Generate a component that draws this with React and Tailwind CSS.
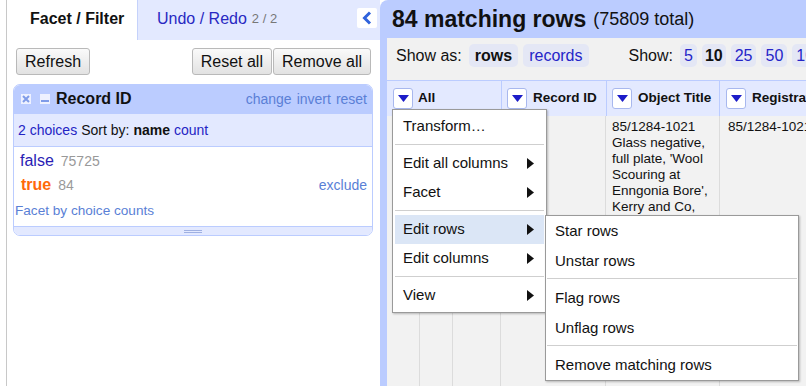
import React from 'react';

function DropBtn() {
    return (
        <div className="w-[20px] h-[21px] bg-white border border-[#a8b8ee] rounded-[3px] flex items-center justify-center shrink-0">
            <svg width="11" height="7" viewBox="0 0 11 7">
                <polygon points="0,0 11,0 5.5,7" fill="#1c1cc8" />
            </svg>
        </div>
    );
}

function Arrow() {
    return (
        <svg width="7" height="11" viewBox="0 0 7 11" className="ml-auto">
            <polygon points="0,0 7,5.5 0,11" fill="#111" />
        </svg>
    );
}

function MenuItem({ label, arrow, active, h = 'h-[29px]' }) {
    return (
        <div className={`${h} flex items-center pl-[8px] pr-[10px] ${active ? 'bg-[#dbe6f6]' : ''}`}>
            <span>{label}</span>
            {arrow && <Arrow />}
        </div>
    );
}

function Sep({ cls = 'mt-[3px] mb-[4px]' }) {
    return <div className={`h-px bg-[#cfcfcf] ${cls}`} />;
}

function Pill({ children, active, cls = 'px-[6px]' }) {
    return (
        <span className={`h-[23px] flex items-center rounded-[5px] bg-[#e4e7f5] ${cls} ${active ? 'font-bold text-[#111]' : 'text-[#2525c8]'}`}>
            {children}
        </span>
    );
}

export default function App() {
    return (
        <div className="relative w-[806px] h-[386px] flex overflow-hidden bg-white text-[#111] font-['Liberation_Sans',Arial,sans-serif]">
            {/* Left panel */}
            <div className="w-[6px] shrink-0" />
            <div className="w-[374px] shrink-0 border-l border-[#c8c8c8] flex flex-col">
                <div className="h-[40px] bg-[#e3e9ff] flex items-stretch">
                    <div className="w-[131px] bg-white border-r border-[#c5d2fb] flex items-center pl-[23px] pb-[3px] text-[16px] font-bold">
                        Facet / Filter
                    </div>
                    <div className="flex items-center pl-[19px] pb-[3px] text-[16px] text-[#2828c2]">
                        Undo / Redo
                        <span className="ml-[5px] text-[13px] text-[#777]">2 / 2</span>
                    </div>
                    <div className="ml-auto mr-[3px] mt-[8px] w-[20px] h-[20px] bg-white rounded-[2px] flex items-center justify-center">
                        <svg width="10" height="14" viewBox="0 0 10 14">
                            <polyline points="8,1.5 2.5,7 8,12.5" fill="none" stroke="#2f62dc" strokeWidth="3" />
                        </svg>
                    </div>
                </div>

                <div className="flex items-center pl-[9px] pr-[9px] mt-[8px] text-[16px]">
                    <button className="h-[27px] px-[8px] border border-[#b9b9b9] rounded-[3px] bg-gradient-to-b from-[#fafafa] to-[#e2e2e2]">Refresh</button>
                    <button className="ml-auto h-[27px] px-[8px] border border-[#b9b9b9] rounded-[3px] bg-gradient-to-b from-[#fafafa] to-[#e2e2e2]">Reset all</button>
                    <button className="ml-[1px] h-[27px] px-[8px] border border-[#b9b9b9] rounded-[3px] bg-gradient-to-b from-[#fafafa] to-[#e2e2e2]">Remove all</button>
                </div>

                {/* Facet */}
                <div className="ml-[6px] mt-[9px] w-[360px] rounded-[7px] border border-[#bbccff] overflow-hidden">
                    <div className="h-[28px] bg-[#bbccff] flex items-center pl-[7px] pr-[5px]">
                        <span className="w-[10px] h-[10px] bg-[#eef1ff] flex items-center justify-center">
                            <svg width="8" height="8" viewBox="0 0 8 8">
                                <path d="M1 1L7 7M7 1L1 7" stroke="#7f9be8" strokeWidth="2" />
                            </svg>
                        </span>
                        <span className="ml-[9px] w-[10px] h-[10px] bg-[#eef1ff] flex items-end justify-center pb-[2px]">
                            <span className="w-[8px] h-[2px] bg-[#7f9be8]" />
                        </span>
                        <span className="ml-[6px] text-[16px] font-bold">Record ID</span>
                        <span className="ml-auto flex gap-[5px] text-[14px] text-[#5a7fd6]">
                            <span>change</span><span>invert</span><span>reset</span>
                        </span>
                    </div>
                    <div className="h-[34px] bg-[#e3e9ff] border-t border-b border-[#bbccff] flex items-center pl-[4px] pt-[1px] text-[14px] gap-[4px]">
                        <span className="text-[#2424c4]">2 choices</span>
                        <span>Sort by:</span>
                        <span className="font-bold">name</span>
                        <span className="text-[#2424c4]">count</span>
                    </div>
                    <div className="bg-white h-[79px] flex flex-col pt-[2px]">
                        <div className="h-[24px] flex items-center pl-[6px]">
                            <span className="text-[16px] text-[#2a1db4]">false</span>
                            <span className="ml-[7px] text-[14px] text-[#999]">75725</span>
                        </div>
                        <div className="h-[24px] flex items-center pl-[7px] pr-[5px]">
                            <span className="text-[16px] font-bold text-[#ff6a0a]">true</span>
                            <span className="ml-[7px] text-[14px] text-[#999]">84</span>
                            <span className="ml-auto text-[14px] text-[#5a7fd6]">exclude</span>
                        </div>
                        <div className="h-[22px] mt-[3px] flex items-center pl-[1px] text-[13.6px] text-[#5a7fd6]">Facet by choice counts</div>
                    </div>
                    <div className="h-[9px] bg-[#e3e9ff] border-t border-[#bbccff] flex flex-col items-center justify-center gap-[1px]">
                        <span className="w-[18px] h-px bg-[#9fb0e2]" />
                        <span className="w-[18px] h-px bg-[#9fb0e2]" />
                    </div>
                </div>
            </div>

            {/* Right panel */}
            <div className="flex-1 flex flex-col">
                <div className="h-[38px] bg-[#bbccff] rounded-tl-[8px] flex items-center pl-[12px] pt-[1px]">
                    <span className="text-[23px] font-bold">84 matching rows</span>
                    <span className="ml-[7px] text-[18px]">(75809 total)</span>
                </div>
                <div className="flex-1 flex">
                    <div className="w-[7px] bg-[#bbccff]" />
                    <div className="flex-1 flex flex-col bg-[#f1f1f1]">
                        <div className="h-[42px] flex items-start pt-[6px] pl-[9px] text-[16px] whitespace-nowrap">
                            <span className="h-[23px] flex items-center">Show as:</span>
                            <span className="ml-[7px] flex gap-[5px]">
                                <Pill active>rows</Pill>
                                <Pill>records</Pill>
                            </span>
                            <span className="ml-[40px] h-[23px] flex items-center">Show:</span>
                            <span className="ml-[7px] flex gap-[5px]">
                                <Pill cls="px-[4px]">5</Pill>
                                <Pill active cls="px-[3px]">10</Pill>
                                <Pill cls="px-[4px]">25</Pill>
                                <Pill cls="px-[4px]">50</Pill>
                                <Pill cls="px-[4px]">100</Pill>
                            </span>
                        </div>

                        <div className="h-[36px] border-t border-[#bbccff] bg-[#e3e9ff] flex text-[13.5px] font-bold whitespace-nowrap">
                            <div className="w-[115px] border-r border-[#bbccff] flex items-center pl-[6px] gap-[5px]">
                                <DropBtn /><span>All</span>
                            </div>
                            <div className="w-[105px] border-r border-[#bbccff] flex items-center pl-[5px] gap-[6px]">
                                <DropBtn /><span>Record ID</span>
                            </div>
                            <div className="w-[113px] border-r border-[#bbccff] flex items-center pl-[5px] gap-[6px]">
                                <DropBtn /><span>Object Title</span>
                            </div>
                            <div className="flex-1 flex items-center pl-[6px] gap-[6px] overflow-hidden">
                                <DropBtn /><span>Registration Number</span>
                            </div>
                        </div>

                        <div className="flex-1 flex bg-[#f2f2f2] text-[13.5px] leading-[16px]">
                            <div className="w-[33px] border-r border-[#dcdcdc]" />
                            <div className="w-[33px] border-r border-[#dcdcdc]" />
                            <div className="w-[48px] border-r border-[#dcdcdc]" />
                            <div className="w-[105px] border-r border-[#dcdcdc]" />
                            <div className="w-[114px] border-r border-[#dcdcdc] pl-[6px] pr-[4px] pt-[3px]">
                                85/1284-1021 Glass negative, full plate, 'Wool Scouring at Enngonia Bore', Kerry and Co,
                            </div>
                            <div className="flex-1 pl-[8px] pt-[3px] whitespace-nowrap overflow-hidden">85/1284-1021</div>
                        </div>
                    </div>
                </div>
            </div>

            {/* Column menu */}
            <div className="absolute left-[392px] top-[109px] w-[155px] bg-white border border-[#9a9a9a] shadow-[1px_1px_2px_rgba(0,0,0,0.25)] py-[2px] px-[2px] text-[15px] z-10">
                <MenuItem label="Transform…" />
                <Sep />
                <MenuItem label="Edit all columns" arrow />
                <MenuItem label="Facet" arrow />
                <Sep />
                <MenuItem label="Edit rows" arrow active />
                <MenuItem label="Edit columns" arrow />
                <Sep />
                <MenuItem label="View" arrow />
            </div>

            {/* Submenu */}
            <div className="absolute left-[545px] top-[215px] w-[254px] bg-white border border-[#9a9a9a] shadow-[1px_1px_2px_rgba(0,0,0,0.25)] px-[1px] text-[15px] z-20">
                <MenuItem label="Star rows" h="h-[30px]" />
                <MenuItem label="Unstar rows" h="h-[30px]" />
                <Sep cls="mt-[2px] mb-[4px]" />
                <MenuItem label="Flag rows" h="h-[30px]" />
                <MenuItem label="Unflag rows" h="h-[30px]" />
                <Sep cls="mt-[2px] mb-[4px]" />
                <MenuItem label="Remove matching rows" h="h-[30px]" />
            </div>
        </div>
    );
}
